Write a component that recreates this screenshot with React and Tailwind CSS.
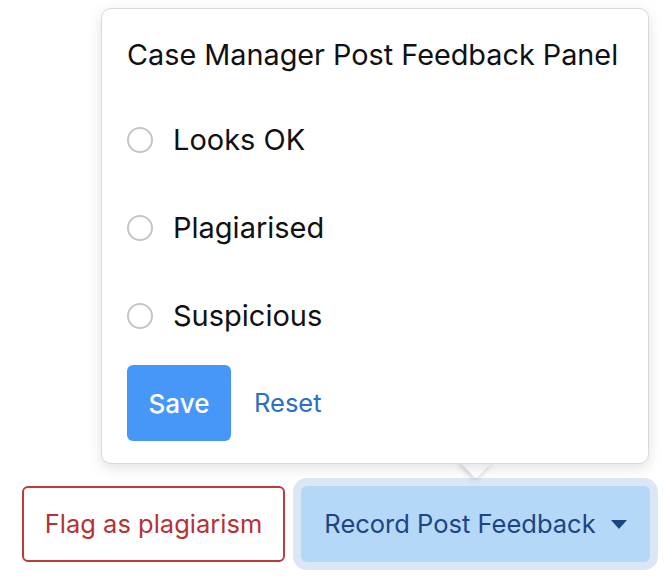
export default function App() {
  const options = ["Looks OK", "Plagiarised", "Suspicious"];

  return (
    <div className="relative h-[586px] w-[668px] bg-white font-['Inter',sans-serif]">
      <div className="relative ml-[101px] w-[548px] pt-[8px]">
        <div className="absolute left-[364px] top-[452px] h-[22px] w-[22px] rotate-45 rounded-[2px] bg-white shadow-[0_2px_6px_rgba(0,0,0,0.2)]" />
        <div className="relative z-10 flex h-[456px] flex-col rounded-[10px] border border-[#d6d9dd] bg-white px-[25px] pt-[26px] pb-[24px] shadow-[0_4px_14px_rgba(0,0,0,0.12)]">
          <div className="flex h-[40px] items-center text-[28.8px] text-[#111]">
            Case Manager Post Feedback Panel
          </div>
          <div className="mt-[21px] flex flex-col">
            {options.map((label) => (
              <label key={label} className="flex h-[88px] items-center gap-[20px]">
                <span className="h-[26px] w-[26px] shrink-0 rounded-full border-2 border-[#c4c6c9] bg-white" />
                <span className="text-[29px] text-[#111]">{label}</span>
              </label>
            ))}
          </div>
          <div className="mt-[5px] flex items-center gap-[23px]">
            <button
              type="button"
              className="flex h-[76px] w-[104px] items-center justify-center rounded-[6px] bg-[#4797f8] text-[26px] font-medium text-white"
            >
              Save
            </button>
            <button type="button" className="text-[25.5px] text-[#2e6fc6]">
              Reset
            </button>
          </div>
        </div>
      </div>

      <div className="mt-[22px] flex items-center gap-[16px] pl-[22px]">
        <button
          type="button"
          className="flex h-[76px] w-[263px] items-center justify-center rounded-[6px] border-2 border-[#c0393b] text-[25.5px] text-[#b73234]"
        >
          Flag as plagiarism
        </button>
        <button
          type="button"
          className="flex h-[76px] w-[349px] items-center justify-center gap-[15px] rounded-[6px] bg-[#b6d8f8] text-[25.5px] text-[#1d4583] ring-[8px] ring-[#dce7f5]"
        >
          Record Post Feedback
          <svg width="16" height="9" viewBox="0 0 16 9">
            <path d="M0 0h16L8 9z" fill="#1d4583" />
          </svg>
        </button>
      </div>
    </div>
  );
}
